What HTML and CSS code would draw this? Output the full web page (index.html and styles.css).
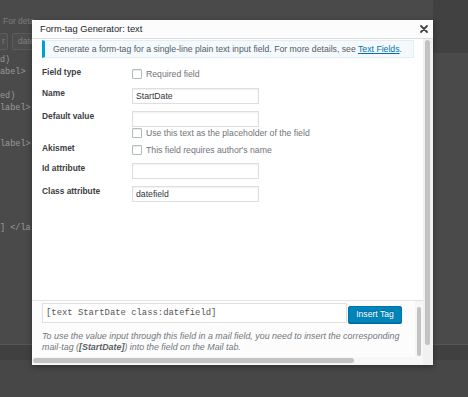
FILE: index.html
```html
<!DOCTYPE html>
<html lang="en">
<head>
<meta charset="utf-8">
<title>Form-tag Generator: text</title>
<link rel="stylesheet" href="styles.css">
</head>
<body>
<div class="page">
  <div class="page-main">
    <div class="page-left">
      <p class="page-note">For deta</p>
      <div class="page-buttons">
        <span class="page-btn page-btn-first">r</span>
        <span class="page-btn">date</span>
      </div>
      <pre class="page-code">d)
abel>

ed)
label>


label>






] &lt;/la</pre>
    </div>
    <div class="page-gap"></div>
    <div class="page-right"><div class="page-right-band"></div></div>
  </div>
  <div class="page-band"></div>
  <div class="page-foot"></div>
</div>

<div class="modal">
  <div class="modal-title">
    <span>Form-tag Generator: text</span>
    <svg class="modal-close" width="8" height="8" viewBox="0 0 8 8"><path d="M1 1L7 7M7 1L1 7" stroke="#444" stroke-width="1.8" stroke-linecap="round"/></svg>
  </div>
  <div class="modal-frame">
    <div class="pane">
      <div class="pane-main">
        <div class="info">Generate a form-tag for a single-line plain text input field. For more details, see <a class="info-link">Text Fields</a>.</div>
        <div class="row row-first">
          <div class="row-label">Field type</div>
          <div class="row-field"><div class="check check-tall"><span class="box"></span>Required field</div></div>
        </div>
        <div class="row">
          <div class="row-label">Name</div>
          <div class="row-field"><div class="input">StartDate</div></div>
        </div>
        <div class="row row-tight">
          <div class="row-label">Default value</div>
          <div class="row-field"><div class="input"></div><div class="check check-short"><span class="box"></span>Use this text as the placeholder of the field</div></div>
        </div>
        <div class="row row-short">
          <div class="row-label">Akismet</div>
          <div class="row-field"><div class="check check-tall"><span class="box"></span>This field requires author's name</div></div>
        </div>
        <div class="row">
          <div class="row-label">Id attribute</div>
          <div class="row-field"><div class="input"></div></div>
        </div>
        <div class="row">
          <div class="row-label">Class attribute</div>
          <div class="row-field"><div class="input">datefield</div></div>
        </div>
      </div>
      <div class="insert">
        <div class="insert-content">
          <div class="tag-row">
            <div class="tag">[text StartDate class:datefield]</div>
            <div class="btn-insert">Insert Tag</div>
          </div>
          <p class="mail-desc">To use the value input through this field in a mail field, you need to insert the corresponding<br>mail-tag (<b>[StartDate]</b>) into the field on the Mail tab.</p>
        </div>
        <div class="vscroll-inner"><div class="thumb thumb-inner"></div></div>
      </div>
      <div class="hscroll"><div class="thumb thumb-h"></div></div>
    </div>
    <div class="vscroll-outer"><div class="thumb thumb-outer"></div></div>
  </div>
</div>
</body>
</html>
```

FILE: styles.css
```css
* { box-sizing: border-box; }
html, body { margin: 0; padding: 0; }
body {
  width: 468px;
  height: 397px;
  overflow: hidden;
  position: relative;
  font-family: "Liberation Sans", Arial, sans-serif;
  background: #474747;
}

/* ---------- dimmed page behind ---------- */
.page { display: flex; flex-direction: column; height: 397px; }
.page-main { height: 344px; display: flex; background: #4a4a4a; }
.page-left { width: 32px; flex: none; padding-left: 3px; }
.page-gap { flex: 1; }
.page-right { width: 35px; flex: none; }
.page-right-band { height: 53px; background: #414141; }
.page-band { height: 16px; background: #404040; border-top: 1px solid #555; }
.page-foot { flex: 1; background: #474747; }

.page-note {
  margin: 0;
  padding-top: 16px;
  font-size: 8.5px;
  line-height: 11px;
  color: #7d7d7d;
  white-space: nowrap;
}
.page-buttons { display: flex; gap: 4px; margin-top: 6px; margin-left: -3px; }
.page-btn {
  height: 17px;
  padding: 0 5px;
  border: 1px solid #5c5c5c;
  border-radius: 2px;
  background: #4e4e4e;
  font-size: 8.5px;
  line-height: 15px;
  color: #808080;
  flex: none;
}
.page-btn-first { width: 8px; padding: 0 0 0 2px; border-left: none; border-radius: 0 2px 2px 0; }
.page-code {
  margin: 4px 0 0 -3px;
  font-family: "Liberation Mono", monospace;
  font-size: 8.5px;
  line-height: 12px;
  color: #9a9a9a;
}

/* ---------- modal ---------- */
.modal {
  position: absolute;
  left: 32px;
  top: 20px;
  width: 401px;
  height: 345px;
  background: #fff;
  display: flex;
  flex-direction: column;
  box-shadow: 0 2px 6px rgba(0, 0, 0, 0.35);
}
.modal-title {
  height: 19px;
  flex: none;
  display: flex;
  align-items: center;
  justify-content: space-between;
  padding: 0 5px 0 8px;
  background: #fcfcfc;
  border-bottom: 1px solid #dcdcdc;
  font-size: 9.3px;
  color: #23282d;
}
.modal-close { display: block; }
.modal-frame { flex: 1; display: flex; min-height: 0; }
.pane { flex: 1; display: flex; flex-direction: column; min-width: 0; }
.pane-main { flex: 1; padding: 1px 9px 0 10px; }

.info {
  height: 18px;
  margin-bottom: 5px;
  padding-left: 8px;
  background: #f3f9fc;
  border: 1px solid #e2eef4;
  border-left: 3px solid #00a0d2;
  font-size: 8.7px;
  line-height: 16px;
  color: #555d66;
  white-space: nowrap;
}
.info-link { color: #0073aa; text-decoration: underline; }

.row { display: flex; padding: 4px 0 3px; }
.row-tight { padding-bottom: 0; }
.row-short { padding-bottom: 2px; }
.row-label {
  width: 90px;
  flex: none;
  font-size: 8.4px;
  line-height: 11px;
  font-weight: bold;
  color: #3c4043;
}
.row-field { flex: 1; min-width: 0; }

.input {
  width: 127px;
  height: 16px;
  padding: 0 3px;
  border: 1px solid #dedede;
  box-shadow: inset 0 1px 2px rgba(0, 0, 0, 0.06);
  background: #fff;
  font-size: 8.7px;
  line-height: 14px;
  color: #32373c;
}

.check {
  display: flex;
  align-items: center;
  font-size: 8.7px;
  color: #70757a;
  white-space: nowrap;
}
.check-tall { height: 14px; }
.check-short { height: 12px; }
.box {
  width: 10px;
  height: 10px;
  margin-right: 4px;
  border: 1px solid #b4b9be;
  border-radius: 1px;
  background: #fff;
  box-shadow: inset 0 1px 1px rgba(0, 0, 0, 0.08);
  flex: none;
}

/* ---------- insert box ---------- */
.insert {
  height: 57px;
  flex: none;
  display: flex;
  background: #fcfcfc;
  border-top: 1px solid #e3e3e3;
}
.insert-content { flex: 1; padding: 2px 0 0 10px; min-width: 0; }
.tag-row { display: flex; align-items: flex-end; }
.tag {
  width: 305px;
  height: 20px;
  padding-left: 3px;
  border: 1px solid #e0e0e0;
  background: #fff;
  font-family: "Liberation Mono", monospace;
  font-size: 8.9px;
  line-height: 18px;
  color: #555;
  white-space: nowrap;
}
.btn-insert {
  width: 54px;
  height: 17px;
  margin-left: 1px;
  background: #0085ba;
  border: 1px solid #0073aa;
  border-radius: 2px;
  box-shadow: 0 1px 0 #006799;
  color: #fff;
  font-size: 8.6px;
  line-height: 15px;
  text-align: center;
  text-shadow: 0 -1px 1px #006799;
}
.mail-desc {
  margin: 8px 0 0;
  font-size: 8.9px;
  line-height: 11px;
  font-style: italic;
  color: #72777c;
  white-space: nowrap;
}
.mail-desc b { color: #5a5f64; }

/* ---------- scrollbars ---------- */
.thumb { background: #c3c3c3; border-radius: 3px; }
.vscroll-inner { width: 8px; flex: none; background: #f6f6f6; padding: 6px 0 1px 2px; }
.thumb-inner { width: 4px; height: 49px; }
.hscroll { height: 8px; flex: none; background: #f7f7f7; padding: 1px 0 0 1px; }
.thumb-h { width: 321px; height: 5px; }
.vscroll-outer { width: 10px; flex: none; background: #f1f1f1; padding: 1px 0 0 2px; }
.thumb-outer { width: 5px; height: 305px; }
```
